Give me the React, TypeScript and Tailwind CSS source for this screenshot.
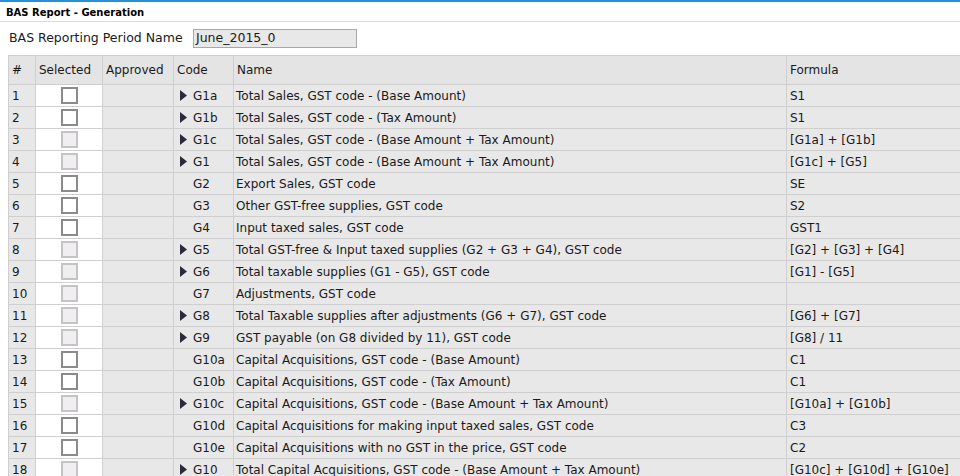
import React from 'react';

interface BasRow {
    code: string;
    name: string;
    formula: string;
    expandable: boolean;
    enabled: boolean;
}

const rows: BasRow[] = [
    { code: 'G1a', name: 'Total Sales, GST code - (Base Amount)', formula: 'S1', expandable: true, enabled: true },
    { code: 'G1b', name: 'Total Sales, GST code - (Tax Amount)', formula: 'S1', expandable: true, enabled: true },
    { code: 'G1c', name: 'Total Sales, GST code - (Base Amount + Tax Amount)', formula: '[G1a] + [G1b]', expandable: true, enabled: false },
    { code: 'G1', name: 'Total Sales, GST code - (Base Amount + Tax Amount)', formula: '[G1c] + [G5]', expandable: true, enabled: false },
    { code: 'G2', name: 'Export Sales, GST code', formula: 'SE', expandable: false, enabled: true },
    { code: 'G3', name: 'Other GST-free supplies, GST code', formula: 'S2', expandable: false, enabled: true },
    { code: 'G4', name: 'Input taxed sales, GST code', formula: 'GST1', expandable: false, enabled: true },
    { code: 'G5', name: 'Total GST-free & Input taxed supplies (G2 + G3 + G4), GST code', formula: '[G2] + [G3] + [G4]', expandable: true, enabled: false },
    { code: 'G6', name: 'Total taxable supplies (G1 - G5), GST code', formula: '[G1] - [G5]', expandable: true, enabled: false },
    { code: 'G7', name: 'Adjustments, GST code', formula: '', expandable: false, enabled: false },
    { code: 'G8', name: 'Total Taxable supplies after adjustments (G6 + G7), GST code', formula: '[G6] + [G7]', expandable: true, enabled: false },
    { code: 'G9', name: 'GST payable (on G8 divided by 11), GST code', formula: '[G8] / 11', expandable: true, enabled: false },
    { code: 'G10a', name: 'Capital Acquisitions, GST code - (Base Amount)', formula: 'C1', expandable: false, enabled: true },
    { code: 'G10b', name: 'Capital Acquisitions, GST code - (Tax Amount)', formula: 'C1', expandable: false, enabled: true },
    { code: 'G10c', name: 'Capital Acquisitions, GST code - (Base Amount + Tax Amount)', formula: '[G10a] + [G10b]', expandable: true, enabled: false },
    { code: 'G10d', name: 'Capital Acquisitions for making input taxed sales, GST code', formula: 'C3', expandable: false, enabled: true },
    { code: 'G10e', name: 'Capital Acquisitions with no GST in the price, GST code', formula: 'C2', expandable: false, enabled: true },
    { code: 'G10', name: 'Total Capital Acquisitions, GST code - (Base Amount + Tax Amount)', formula: '[G10c] + [G10d] + [G10e]', expandable: true, enabled: false },
];

const Checkbox: React.FC<{ enabled: boolean }> = ({ enabled }) => (
    <div
        className={
            enabled
                ? 'w-[17px] h-[17px] mx-auto border-2 border-[#8a8a8a] bg-white'
                : 'w-[17px] h-[17px] mx-auto border-2 border-[#c4c4c4] bg-[#f0eef0]'
        }
    />
);

const App: React.FC = () => {
    return (
        <div className="w-[960px] h-[476px] overflow-hidden bg-white text-[#1a1a1a] font-['DejaVu_Sans',sans-serif] text-[12px]">
            <div className="h-[2px] bg-[#2a8fd6]" />
            <div className="h-[20px] pl-[6px] pt-[2px] flex items-center font-bold text-[10px] text-black border-b border-[#dcdcdc]">
                BAS Report - Generation
            </div>
            <div className="h-[33px] pl-[9px] flex items-center">
                <span className="w-[184px] whitespace-nowrap text-[12.5px]">BAS Reporting Period Name</span>
                <div className="w-[164px] h-[19px] bg-[#e8e8e8] border border-[#a8a8a8] pl-[2px] flex items-center text-[12.5px]">
                    June_2015_0
                </div>
            </div>
            <table className="ml-[8px] table-fixed border-collapse w-[1000px]">
                <colgroup>
                    <col className="w-[27px]" />
                    <col className="w-[67px]" />
                    <col className="w-[71px]" />
                    <col className="w-[60px]" />
                    <col className="w-[553px]" />
                    <col />
                </colgroup>
                <thead>
                    <tr className="h-[29px] bg-[#e4e4e4] text-left">
                        {['#', 'Selected', 'Approved', 'Code', 'Name', 'Formula'].map((h) => (
                            <th key={h} className="font-normal border border-[#cfcfcf] px-[3px] align-middle">
                                {h}
                            </th>
                        ))}
                    </tr>
                </thead>
                <tbody>
                    {rows.map((r, i) => (
                        <tr key={r.code} className="h-[22px] bg-[#e8e8e8]">
                            <td className="border border-[#cfcfcf] px-[3px]">{i + 1}</td>
                            <td className="border border-[#cfcfcf] bg-white">
                                <Checkbox enabled={r.enabled} />
                            </td>
                            <td className="border border-[#cfcfcf]" />
                            <td className="border border-[#cfcfcf] pl-[6px]">
                                <div className="flex items-center">
                                    <span className="w-[13px]">
                                        {r.expandable && (
                                            <svg width="7" height="11" viewBox="0 0 7 11">
                                                <path d="M0 0 L7 5.5 L0 11 Z" fill="#2b2b3b" />
                                            </svg>
                                        )}
                                    </span>
                                    {r.code}
                                </div>
                            </td>
                            <td className="border border-[#cfcfcf] px-[2px] whitespace-nowrap">{r.name}</td>
                            <td className="border border-[#cfcfcf] px-[3px] whitespace-nowrap">{r.formula}</td>
                        </tr>
                    ))}
                </tbody>
            </table>
        </div>
    );
};

export default App;
